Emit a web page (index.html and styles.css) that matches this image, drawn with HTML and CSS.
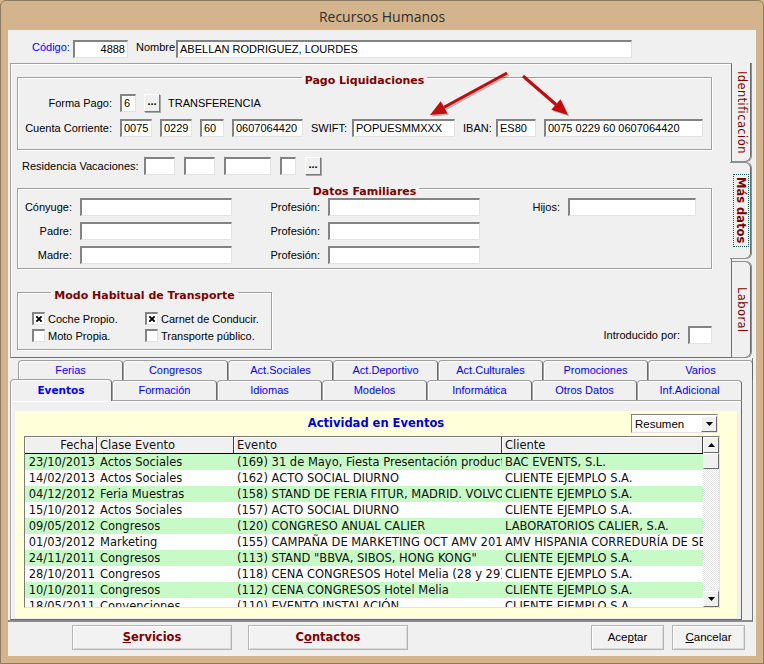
FILE: index.html
```html
<!DOCTYPE html>
<html lang="es">
<head>
    <meta charset="UTF-8">
    <title>Recursos Humanos</title>
    <link rel="stylesheet" href="styles.css">
</head>
<body>
<div class="ventana">
    <div class="titulo">Recursos Humanos</div>
    <div class="cliente">
        <div class="cabecera">
            <span class="etq-codigo">Código:</span>
            <span class="campo w55 derecha">4888</span>
            <span class="etq-nombre">Nombre:</span>
            <span class="campo w456">ABELLAN RODRIGUEZ, LOURDES</span>
        </div>

        <div class="superior">
            <div class="pagina">
                <fieldset class="grupo pago">
                    <legend>Pago Liquidaciones</legend>
                    <div class="fila primera">
                        <span class="etq w94">Forma Pago:</span>
                        <span class="campo w16">6</span>
                        <span class="puntos">...</span>
                        <span>TRANSFERENCIA</span>
                    </div>
                    <div class="fila">
                        <span class="etq w94">Cuenta Corriente:</span>
                        <span class="campo w32">0075</span>
                        <span class="campo w32">0229</span>
                        <span class="campo w24">60</span>
                        <span class="campo w71">0607064420</span>
                        <span class="etq-libre w33">SWIFT:</span>
                        <span class="campo w103">POPUESMMXXX</span>
                        <span class="etq-libre w25">IBAN:</span>
                        <span class="campo w40">ES80</span>
                        <span class="campo w159">0075 0229 60 0607064420</span>
                    </div>
                </fieldset>

                <div class="fila residencia">
                    <span class="etq-libre w113">Residencia Vacaciones:</span>
                    <span class="campo w31"></span>
                    <span class="campo w31"></span>
                    <span class="campo w47"></span>
                    <span class="campo w16"></span>
                    <span class="puntos">...</span>
                </div>

                <fieldset class="grupo familia">
                    <legend>Datos Familiares</legend>
                    <div class="fila primera">
                        <span class="etq w54">Cónyuge:</span>
                        <span class="campo w152"></span>
                        <span class="etq w80">Profesión:</span>
                        <span class="campo w152"></span>
                        <span class="etq w72">Hijos:</span>
                        <span class="campo w128"></span>
                    </div>
                    <div class="fila">
                        <span class="etq w54">Padre:</span>
                        <span class="campo w152"></span>
                        <span class="etq w80">Profesión:</span>
                        <span class="campo w152"></span>
                    </div>
                    <div class="fila">
                        <span class="etq w54">Madre:</span>
                        <span class="campo w152"></span>
                        <span class="etq w80">Profesión:</span>
                        <span class="campo w152"></span>
                    </div>
                </fieldset>

                <div class="pie-superior">
                    <fieldset class="grupo transporte">
                        <legend>Modo Habitual de Transporte</legend>
                        <div class="checks">
                            <span class="check"><span class="caja marcada"><svg viewBox="0 0 9 9"><path d="M1.5 1.5 L7.5 7.5 M7.5 1.5 L1.5 7.5"/></svg></span>Coche Propio.</span>
                            <span class="check"><span class="caja marcada"><svg viewBox="0 0 9 9"><path d="M1.5 1.5 L7.5 7.5 M7.5 1.5 L1.5 7.5"/></svg></span>Carnet de Conducir.</span>
                            <span class="check"><span class="caja"></span>Moto Propia.</span>
                            <span class="check"><span class="caja"></span>Transporte público.</span>
                        </div>
                    </fieldset>
                    <div class="fila introducido">
                        <span>Introducido por:</span>
                        <span class="campo w24"></span>
                    </div>
                </div>
            </div>

            <div class="vtabs">
                <div class="vtab identificacion">Identificación</div>
                <div class="vtab activa"><span class="foco">Más datos</span></div>
                <div class="vtab laboral">Laboral</div>
            </div>
        </div>

        <div class="inferior">
            <div class="pestanas atras">
                <span class="pestana">Ferias</span>
                <span class="pestana">Congresos</span>
                <span class="pestana">Act.Sociales</span>
                <span class="pestana">Act.Deportivo</span>
                <span class="pestana">Act.Culturales</span>
                <span class="pestana">Promociones</span>
                <span class="pestana">Varios</span>
            </div>
            <div class="pestanas delante">
                <span class="pestana activa">Eventos</span>
                <span class="pestana">Formación</span>
                <span class="pestana">Idiomas</span>
                <span class="pestana">Modelos</span>
                <span class="pestana">Informática</span>
                <span class="pestana">Otros Datos</span>
                <span class="pestana">Inf.Adicional</span>
            </div>
            <div class="pagina-eventos">
                <div class="panel-amarillo">
                    <div class="cabecera-eventos">
                        <h2>Actividad en Eventos</h2>
                        <div class="combo">
                            <span>Resumen</span>
                            <span class="combo-btn"><svg viewBox="0 0 7 4"><path d="M0 0 H7 L3.5 4 Z"/></svg></span>
                        </div>
                    </div>
                    <div class="tabla">
                        <div class="rejilla">
                            <div class="fila-tabla encabezado">
                                <span class="fecha">Fecha</span>
                                <span>Clase Evento</span>
                                <span>Evento</span>
                                <span>Cliente</span>
                            </div>
                            <div class="fila-tabla verde">
                                <span class="fecha">23/10/2013</span><span>Actos Sociales</span><span>(169) 31 de Mayo, Fiesta Presentación producto</span><span>BAC EVENTS, S.L.</span>
                            </div>
                            <div class="fila-tabla">
                                <span class="fecha">14/02/2013</span><span>Actos Sociales</span><span>(162) ACTO SOCIAL DIURNO</span><span>CLIENTE EJEMPLO S.A.</span>
                            </div>
                            <div class="fila-tabla verde">
                                <span class="fecha">04/12/2012</span><span>Feria Muestras</span><span>(158) STAND DE FERIA FITUR, MADRID. VOLVO</span><span>CLIENTE EJEMPLO S.A.</span>
                            </div>
                            <div class="fila-tabla">
                                <span class="fecha">15/10/2012</span><span>Actos Sociales</span><span>(157) ACTO SOCIAL DIURNO</span><span>CLIENTE EJEMPLO S.A.</span>
                            </div>
                            <div class="fila-tabla verde">
                                <span class="fecha">09/05/2012</span><span>Congresos</span><span>(120) CONGRESO ANUAL CALIER</span><span>LABORATORIOS CALIER, S.A.</span>
                            </div>
                            <div class="fila-tabla">
                                <span class="fecha">01/03/2012</span><span>Marketing</span><span>(155) CAMPAÑA DE MARKETING OCT AMV 2012</span><span>AMV HISPANIA CORREDURÍA DE SEGUROS</span>
                            </div>
                            <div class="fila-tabla verde">
                                <span class="fecha">24/11/2011</span><span>Congresos</span><span>(113) STAND "BBVA, SIBOS, HONG KONG"</span><span>CLIENTE EJEMPLO S.A.</span>
                            </div>
                            <div class="fila-tabla">
                                <span class="fecha">28/10/2011</span><span>Congresos</span><span>(118) CENA CONGRESOS Hotel Melia (28 y 29)</span><span>CLIENTE EJEMPLO S.A.</span>
                            </div>
                            <div class="fila-tabla verde">
                                <span class="fecha">10/10/2011</span><span>Congresos</span><span>(112) CENA CONGRESOS Hotel Melia</span><span>CLIENTE EJEMPLO S.A.</span>
                            </div>
                            <div class="fila-tabla">
                                <span class="fecha">18/05/2011</span><span>Convenciones</span><span>(110) EVENTO INSTALACIÓN</span><span>CLIENTE EJEMPLO S.A.</span>
                            </div>
                        </div>
                        <div class="scroll">
                            <span class="scroll-btn"><svg viewBox="0 0 7 4"><path d="M0 4 H7 L3.5 0 Z"/></svg></span>
                            <span class="scroll-thumb"></span>
                            <span class="scroll-pista"></span>
                            <span class="scroll-btn"><svg viewBox="0 0 7 4"><path d="M0 0 H7 L3.5 4 Z"/></svg></span>
                        </div>
                    </div>
                </div>
            </div>
        </div>

        <div class="botonera">
            <span class="boton grande servicios"><u>S</u>ervicios</span>
            <span class="boton grande"><span>C<u>o</u>ntactos</span></span>
            <span class="boton pequeno aceptar">Ace<u>p</u>tar</span>
            <span class="boton pequeno"><u>C</u>ancelar</span>
        </div>
    </div>

    <svg class="flechas" viewBox="0 0 764 664">
        <g class="sombra" transform="translate(1.5 1.5)">
            <line x1="506" y1="72" x2="443" y2="106.3"/>
            <polygon points="429,114 446.4,112.5 439.7,100.2"/>
            <line x1="522" y1="75" x2="555" y2="103.5"/>
            <polygon points="567,114 550.3,108.8 559.5,98.2"/>
        </g>
        <g class="flecha">
            <line x1="506" y1="72" x2="443" y2="106.3"/>
            <polygon points="429,114 446.4,112.5 439.7,100.2"/>
            <line x1="522" y1="75" x2="555" y2="103.5"/>
            <polygon points="567,114 550.3,108.8 559.5,98.2"/>
        </g>
    </svg>
</div>
</body>
</html>
```

FILE: styles.css
```css
body {
    margin: 0;
    background: #d4b48c;
    font-family: "Liberation Sans", Arial, sans-serif;
    font-size: 11px;
    color: #000;
}

.ventana {
    position: relative;
    width: 764px;
    height: 664px;
    box-sizing: border-box;
    background: #d4b48c;
    border: 1px solid #8c7a62;
    border-radius: 6px 6px 0 0;
    padding: 0 7px 7px 7px;
}
.titulo {
    height: 29px;
    line-height: 31px;
    text-align: center;
    font-family: "Open Sans", sans-serif;
    font-size: 14px;
    color: #2e2e2e;
}
.cliente {
    height: 626px;
    background: #f0f0f0;
    display: flex;
    flex-direction: column;
}

/* campos */
.campo {
    display: block;
    flex: none;
    height: 18px;
    box-sizing: border-box;
    background: #fff;
    border-style: solid;
    border-width: 2px 1px 1px 2px;
    border-color: #838383 #e3e3e3 #e3e3e3 #838383;
    padding: 0 2px;
    line-height: 15px;
    white-space: nowrap;
    overflow: hidden;
}
.derecha { text-align: right; }
.w16 { width: 16px; }
.w24 { width: 24px; }
.w25 { width: 25px; }
.w31 { width: 31px; }
.w32 { width: 32px; }
.w33 { width: 33px; }
.w40 { width: 40px; }
.w47 { width: 47px; }
.w54 { width: 54px; }
.w55 { width: 55px; }
.w71 { width: 71px; }
.w72 { width: 72px; }
.w80 { width: 80px; }
.w94 { width: 94px; }
.w103 { width: 103px; }
.w113 { width: 113px; }
.w128 { width: 128px; }
.w152 { width: 152px; }
.w159 { width: 159px; }
.w456 { width: 456px; }

.etq {
    flex: none;
    text-align: right;
    white-space: nowrap;
}
.etq-libre {
    flex: none;
    white-space: nowrap;
}
.puntos {
    flex: none;
    width: 16px;
    height: 18px;
    box-sizing: border-box;
    border: 1px solid;
    border-color: #fff #7a7a7a #7a7a7a #fff;
    box-shadow: 1px 1px 0 #a8a8a8;
    font-weight: bold;
    text-align: center;
    line-height: 13px;
}

/* cabecera */
.cabecera {
    height: 33px;
    box-sizing: border-box;
    padding: 10px 0 0 24px;
    display: flex;
    align-items: flex-start;
    line-height: 14px;
}
.etq-codigo {
    width: 41px;
    color: #0000ff;
}
.etq-nombre {
    width: 40px;
    margin-left: 8px;
}

/* parte superior con pestañas verticales */
.superior {
    display: flex;
    height: 295px;
}
.pagina {
    width: 722px;
    margin-left: 2px;
    box-sizing: border-box;
    border: 1px solid;
    border-color: #a0a0a0 #707070 #707070 #a0a0a0;
    box-shadow: inset 1px 1px #fff;
}
.grupo {
    margin: 3px 19px 0 6px;
    padding: 0;
    min-width: 0;
    border: 1px solid #a0a0a0;
    box-shadow: 1px 1px 0 #fff, inset 1px 1px 0 #fff;
}
.grupo legend {
    margin: 0 auto;
    padding: 7px 3px 0 3px;
    font: bold 11px/13px "DejaVu Sans", sans-serif;
    color: #800000;
}
.fila {
    display: flex;
    align-items: center;
    gap: 8px;
    height: 18px;
}
.pago .fila { margin-top: 7px; }
.pago { padding-bottom: 12px; }

.residencia {
    margin: 7px 0 0 11px;
    gap: 9px;
}

.familia .fila { margin-top: 6px; }
.familia .fila.primera { margin-top: 0; }
.familia { padding-bottom: 4px; }

.pie-superior {
    display: flex;
    justify-content: space-between;
    align-items: flex-end;
    margin: 13px 19px 0 6px;
}
.transporte {
    margin: 0;
    width: 255px;
    box-sizing: border-box;
    padding-bottom: 5px;
}
.checks {
    display: grid;
    grid-template-columns: 113px auto;
    grid-auto-rows: 17px;
    margin-top: 8px;
    padding-left: 14px;
}
.check {
    display: flex;
    align-items: center;
    gap: 3px;
    white-space: nowrap;
}
.caja {
    width: 13px;
    height: 13px;
    box-sizing: border-box;
    background: #fff;
    border-style: solid;
    border-width: 2px 1px 1px 2px;
    border-color: #838383 #e3e3e3 #e3e3e3 #838383;
    display: flex;
    align-items: center;
    justify-content: center;
}
.caja svg {
    width: 8px;
    height: 8px;
}
.caja path {
    stroke: #000;
    stroke-width: 2.2;
}
.introducido {
    margin-bottom: 6px;
}

.vtabs {
    width: 20px;
    display: flex;
    flex-direction: column;
}
.vtab {
    writing-mode: vertical-rl;
    box-sizing: border-box;
    border: 1px solid #8f8f8f;
    border-left: none;
    border-radius: 0 6px 6px 0;
    box-shadow: inset -1px 0 #6a6a6a;
    display: flex;
    align-items: center;
    justify-content: center;
    font: 11.5px "DejaVu Sans", sans-serif;
    letter-spacing: 0.4px;
    color: #800000;
}
.identificacion {
    height: 99px;
    border-top: none;
    border-radius: 0 0 6px 0;
}
.vtab.activa {
    height: 97px;
    width: 22px;
    margin-left: -2px;
    background: #f0f0f0;
    font-weight: bold;
    letter-spacing: 0;
}
.foco {
    outline: 1px dotted #0a5a5a;
    padding: 2px 0;
}
.laboral {
    flex: 1;
    margin-top: 2px;
}

/* parte inferior */
.inferior {
    height: 264px;
    width: 745px;
    box-sizing: border-box;
    padding-left: 2px;
    border-right: 1px solid #7a7a7a;
    border-bottom: 2px solid #8a8a8a;
}
.pestanas {
    display: flex;
    height: 20px;
}
.atras {
    margin: 2px 0 0 8px;
}
.delante {
    position: relative;
    z-index: 1;
}
.pestana {
    flex: none;
    width: 105px;
    height: 20px;
    box-sizing: border-box;
    border: 1px solid #a0a0a0;
    border-bottom: none;
    border-right-color: #6a6a6a;
    border-radius: 4px 4px 0 0;
    box-shadow: inset 1px 1px #fff;
    text-align: center;
    line-height: 19px;
    color: #0000ff;
    background: #f0f0f0;
}
.pestana.activa {
    width: 102px;
    height: 22px;
    margin-top: -1px;
    font: bold 10.5px/21px "DejaVu Sans", sans-serif;
}
.pagina-eventos {
    height: 220px;
    width: 732px;
    box-sizing: border-box;
    border: 1px solid;
    border-color: #a0a0a0 #6a6a6a #6a6a6a #a0a0a0;
    box-shadow: inset 1px 1px #fff;
    padding: 10px 4px 0 4px;
}
.panel-amarillo {
    height: 207px;
    background: #ffffd9;
    overflow: hidden;
}
.cabecera-eventos {
    display: grid;
    grid-template-columns: 1fr auto 1fr;
    padding-top: 3px;
}
.cabecera-eventos h2 {
    grid-column: 2;
    margin: 0;
    font: bold 11.5px/19px "DejaVu Sans", sans-serif;
    color: #0000e6;
}
.combo {
    justify-self: end;
    margin-right: 19px;
    width: 87px;
    height: 19px;
    box-sizing: border-box;
    background: #fff;
    border-style: solid;
    border-width: 1px;
    border-color: #838383 #e3e3e3 #e3e3e3 #838383;
    display: flex;
    align-items: center;
    justify-content: space-between;
    padding-left: 3px;
    font-size: 11.5px;
}
.combo-btn, .scroll-btn {
    width: 16px;
    height: 16px;
    box-sizing: border-box;
    background: #f0f0f0;
    border: 1px solid;
    border-color: #fff #6a6a6a #6a6a6a #fff;
    display: flex;
    align-items: center;
    justify-content: center;
}
.combo-btn svg, .scroll-btn svg {
    width: 7px;
    height: 4px;
}
.tabla {
    display: flex;
    height: 172px;
    margin: 3px 17px 0 9px;
    box-sizing: border-box;
    border: 1px solid;
    border-color: #7a7a7a #e3e3e3 #e3e3e3 #7a7a7a;
    background: #fff;
}
.rejilla {
    flex: 1;
    overflow: hidden;
}
.fila-tabla {
    display: grid;
    grid-template-columns: 72px 137px 268px 1fr;
    height: 16px;
    font: 11.5px/16px "DejaVu Sans", sans-serif;
    color: #101010;
}
.fila-tabla span {
    padding: 0 3px;
    white-space: nowrap;
    overflow: hidden;
}
.fila-tabla .fecha {
    text-align: right;
    padding-right: 2px;
}
.encabezado {
    height: 17px;
    background: #f0f0f0;
    border-bottom: 1px solid #000;
    box-sizing: border-box;
}
.encabezado span {
    border-right: 1px solid #404040;
    box-shadow: inset 1px 1px #fff;
}
.verde { background: #c8fac8; }
.scroll {
    width: 16px;
    display: flex;
    flex-direction: column;
}
.scroll-thumb {
    height: 16px;
    box-sizing: border-box;
    background: #f0f0f0;
    border: 1px solid;
    border-color: #fff #6a6a6a #6a6a6a #fff;
}
.scroll-pista {
    flex: 1;
    background: repeating-conic-gradient(#fff 0 25%, #e4e4e4 0 50%) 0 0 / 2px 2px;
}

/* botones de abajo */
.botonera {
    display: flex;
    gap: 16px;
    padding: 3px 11px 0 64px;
}
.boton {
    height: 25px;
    box-sizing: border-box;
    border: 1px solid #b4b4b4;
    box-shadow: inset 1px 1px #fff, inset -1px -1px #dadada;
    background: #f2f2f2;
    text-align: center;
    line-height: 23px;
}
.grande {
    width: 160px;
    font: bold 11.5px/23px "DejaVu Sans", sans-serif;
    color: #800000;
}
.pequeno {
    width: 73px;
    font-size: 11.5px;
}
.aceptar {
    margin-left: auto;
}
.botonera .pequeno + .pequeno {
    margin-left: -8px;
}

/* flechas rojas */
.flechas {
    position: absolute;
    left: 0;
    top: 0;
    width: 764px;
    height: 664px;
    pointer-events: none;
}
.flecha line {
    stroke: #c40a0a;
    stroke-width: 3;
}
.flecha polygon {
    fill: #c40a0a;
}
.sombra line {
    stroke: rgba(0, 0, 0, 0.25);
    stroke-width: 3;
}
.sombra polygon {
    fill: rgba(0, 0, 0, 0.25);
}
```
